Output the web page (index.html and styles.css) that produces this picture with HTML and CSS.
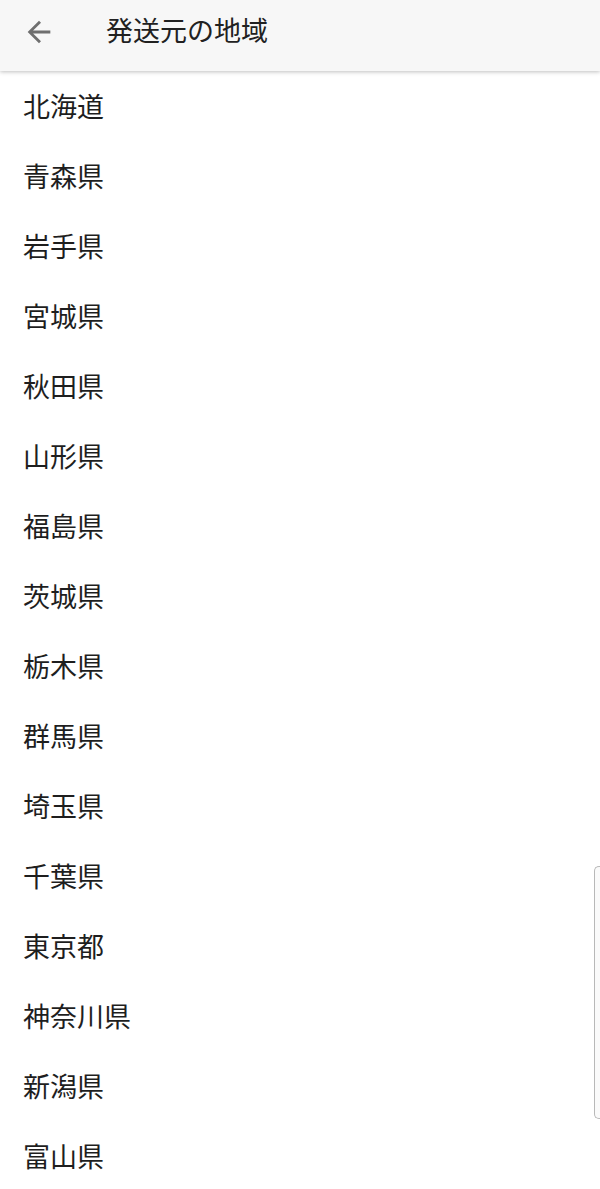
FILE: index.html
```html
<!DOCTYPE html>
<html lang="ja">
<head>
    <meta charset="UTF-8">
    <meta name="viewport" content="width=device-width, initial-scale=1.0">
    <title>発送元の地域</title>
    <link rel="stylesheet" href="styles.css">
</head>
<body>
    <header class="toolbar">
        <span class="back">
            <svg width="34" height="34" viewBox="0 0 24 24"><path d="M20 11H7.83l5.59-5.59L12 4l-8 8 8 8 1.41-1.41L7.83 13H20v-2z" fill="#6f6f6f"/></svg>
        </span>
        <h1 class="title">発送元の地域</h1>
    </header>

    <ul class="region-list">
        <li>北海道</li>
        <li>青森県</li>
        <li>岩手県</li>
        <li>宮城県</li>
        <li>秋田県</li>
        <li>山形県</li>
        <li>福島県</li>
        <li>茨城県</li>
        <li>栃木県</li>
        <li>群馬県</li>
        <li>埼玉県</li>
        <li>千葉県</li>
        <li>東京都</li>
        <li>神奈川県</li>
        <li>新潟県</li>
        <li>富山県</li>
    </ul>

    <div class="scroll-handle"></div>
</body>
</html>
```

FILE: styles.css
```css
body {
    font-family: Roboto, "Noto Sans CJK JP", sans-serif;
    margin: 0;
    padding: 0;
    background: #fff;
    color: #222;
    height: 1189px;
    overflow: hidden;
}

.toolbar {
    height: 71px;
    display: flex;
    align-items: center;
    background: #f7f7f7;
    box-shadow: 0 1px 4px rgba(0, 0, 0, 0.25);
    position: relative;
    z-index: 1;
}

.back {
    width: 34px;
    height: 34px;
    margin-left: 22px;
    margin-top: -7px;
    display: flex;
}

.title {
    margin: -6px 0 0 50px;
    font-size: 27px;
    font-weight: normal;
    line-height: 1;
    color: #212121;
}

.region-list {
    list-style: none;
    margin: 0;
    padding: 2px 0 0 0;
}

.region-list li {
    height: 70px;
    display: flex;
    align-items: center;
    padding-left: 23px;
    font-size: 27px;
    line-height: 1;
    color: #1e1e1e;
}

.scroll-handle {
    position: absolute;
    right: 0;
    top: 866px;
    width: 5px;
    height: 251px;
    border: 1px solid #b8b8b8;
    border-right: none;
    border-radius: 5px 0 0 5px;
    background: #fafafa;
}
```
